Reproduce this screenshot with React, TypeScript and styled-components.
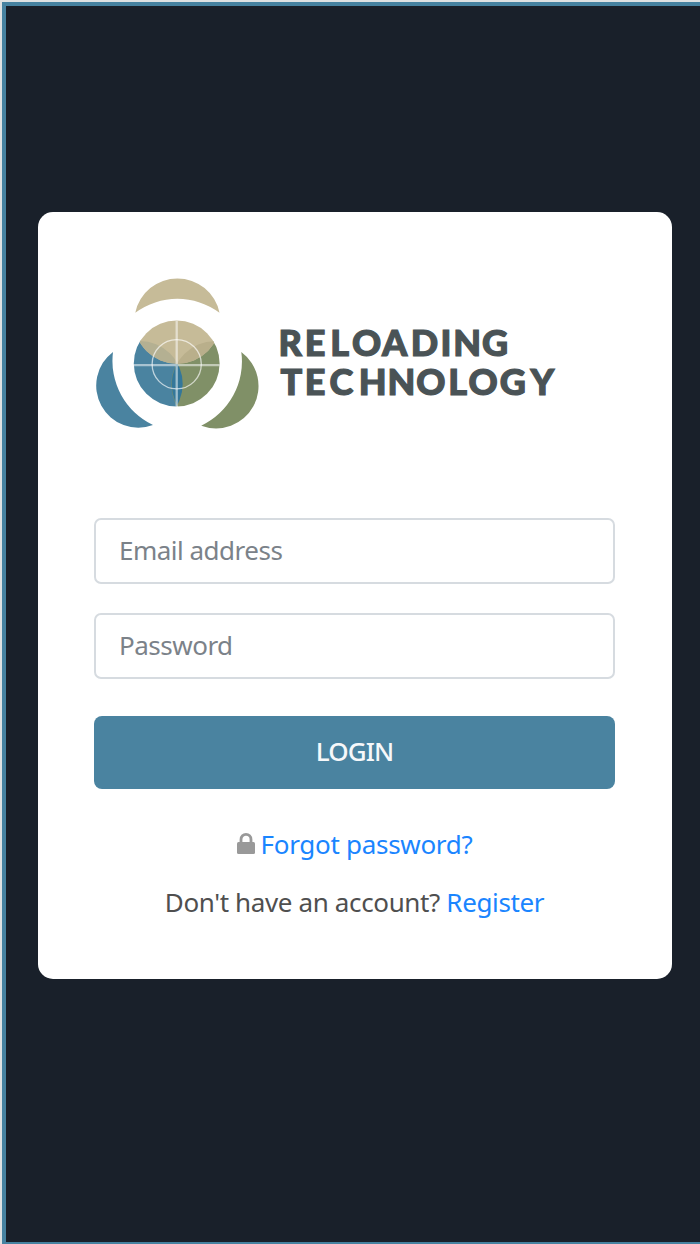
import React from "react";
import styled, { createGlobalStyle } from "styled-components";

const GlobalStyle = createGlobalStyle`
  *, *::before, *::after { box-sizing: border-box; }
  body { margin: 0; background: #19202a; }
`;

const Page = styled.main`
  height: 1244px;
  border: 2px solid #dfe2e2;
  border-right: 0;
  border-bottom: 0;
  font-family: "Noto Sans", "Open Sans", sans-serif;
  font-size: 26px;
`;

const Frame = styled.div`
  height: 100%;
  padding: 206px 29px 0 32px;
  border: 4px solid #4682a0;
  border-right: 0;
  border-bottom-width: 2px;
  background: #19202a;
`;

const Card = styled.section`
  height: 767px;
  width: 634px;
  padding: 50px 56px 0;
  border-radius: 15px;
  background: #fff;
`;

const Logo = styled.svg`
  display: block;
  width: 480px;
  height: 180px;
`;

const Wordmark = styled.text`
  font-family: Lato, sans-serif;
  font-weight: 900;
  font-size: 36px;
  fill: #4a5356;
  stroke: #4a5356;
  stroke-width: 1.2px;
`;

const Form = styled.form`
  display: flex;
  flex-direction: column;
  margin-top: 76px;
`;

const Field = styled.input`
  width: 521px;
  height: 66px;
  margin: 0 0 29px;
  padding: 0 23px 2px;
  border: 2px solid #d6dbe0;
  border-radius: 7px;
  outline: 0;
  background: #fff;
  font: inherit;
  letter-spacing: -0.5px;
  color: #495057;
  &::placeholder { color: #7b8289; opacity: 1; }
`;

const LoginButton = styled.button`
  width: 521px;
  height: 73px;
  margin-top: 8px;
  padding: 0 0 4px;
  border: 0;
  border-radius: 8px;
  background: #4a83a0;
  color: #f6f8fa;
  font: inherit;
  font-weight: 500;
  letter-spacing: -0.9px;
`;

const Line = styled.p<{ $top: number; $spacing: number }>`
  display: flex;
  justify-content: center;
  align-items: center;
  width: 521px;
  height: 36px;
  margin: ${(p) => p.$top}px 0 0;
  color: #4f4f4f;
  letter-spacing: ${(p) => p.$spacing}px;
  white-space: pre;
`;

const Link = styled.a`
  color: #1a85ff;
  text-decoration: none;
`;

const LockIcon = styled.svg`
  width: 18px;
  height: 21px;
  margin: 0 6px 2px 0;
`;

function BrandLogo() {
  return (
    <Logo viewBox="94 262.3 480 180" role="img" aria-label="Reloading Technology">
      <defs>
        <clipPath id="scope"><circle cx="176.7" cy="363.8" r="42.9" /></clipPath>
        <clipPath id="blue"><circle cx="139.7" cy="384.3" r="43" /></clipPath>
        <clipPath id="tan"><circle cx="177.2" cy="320.5" r="43.5" /></clipPath>
      </defs>
      <path fill="#c6bb98" d="M135.3 313A43 43 0 0 1 219.5 313A71 71 0 0 0 135.3 313Z" />
      <path fill="#4a83a0" d="M113 352.2A42.1 42.1 0 0 0 153 425.3A71 71 0 0 1 113 352.2Z" />
      <path fill="#809067" d="M241.3 352.2A42.4 42.4 0 0 1 201.2 426A71 71 0 0 0 241.3 352.2Z" />
      <g clipPath="url(#scope)">
        <circle cx="139.7" cy="384.3" r="43.4" fill="#4a83a0" />
        <circle cx="214.7" cy="384.6" r="43.4" fill="#809067" />
        <g clipPath="url(#blue)"><circle cx="214.7" cy="384.6" r="43" fill="#34779a" /></g>
        <circle cx="177.2" cy="320.5" r="43.5" fill="#c6bb98" />
        <g clipPath="url(#tan)">
          <circle cx="139.7" cy="384.3" r="43" fill="#b4b092" />
          <circle cx="214.7" cy="384.6" r="43" fill="#b9af8b" />
        </g>
      </g>
      <g fill="none" stroke="#fff">
        <path d="M176.7 321V407M134 365.4H219.5" strokeWidth="2.3" opacity=".52" />
        <circle cx="176.7" cy="364.5" r="24.6" strokeWidth="1.3" opacity=".65" />
      </g>
      <Wordmark y="356" x="278.6 304.8 330.3 352 382 410.8 440.4 453.2 482">RELOADING</Wordmark>
      <Wordmark y="395.5" x="280.4 304.8 329.6 358.8 387.4 416.2 448.2 468.6 499.8 530.5">TECHNOLOGY</Wordmark>
    </Logo>
  );
}

export default function App() {
  return (
    <Page>
      <GlobalStyle />
      <Frame>
        <Card>
          <BrandLogo />
          <Form onSubmit={(e) => e.preventDefault()}>
            <Field type="email" placeholder="Email address" />
            <Field type="password" placeholder="Password" />
            <LoginButton type="submit">LOGIN</LoginButton>
          </Form>
          <Line $top={37} $spacing={-0.3}>
            <LockIcon viewBox="0 0 18 21">
              <path d="M4 10V6.4a5 5 0 0 1 10 0V10" fill="none" stroke="#999" strokeWidth="2.8" />
              <rect y="9" width="18" height="12" rx="1.5" fill="#999" />
            </LockIcon>
            <Link href="#forgot">Forgot password?</Link>
          </Line>
          <Line $top={22} $spacing={-0.37}>
            Don't have an account? <Link href="#register">Register</Link>
          </Line>
        </Card>
      </Frame>
    </Page>
  );
}
